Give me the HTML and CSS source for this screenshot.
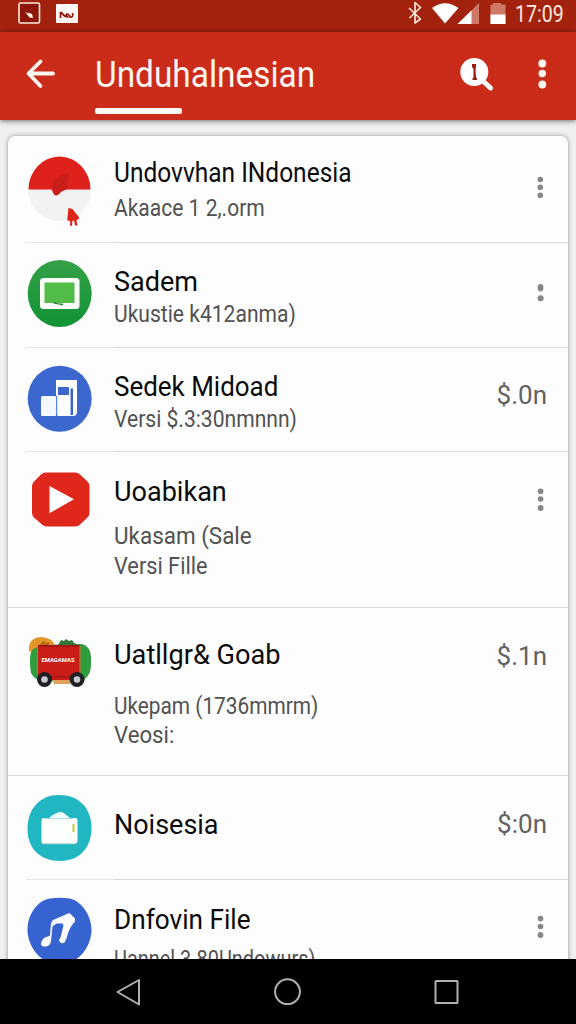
FILE: index.html
```html
<!DOCTYPE html>
<html lang="id">
<head>
<meta charset="utf-8">
<title>Unduhalnesian</title>
<link rel="stylesheet" href="styles.css">
</head>
<body>
<div class="screen">
  <header class="status">
    <svg class="status-left" viewBox="0 0 96 32">
      <rect x="19" y="3" width="20.500" height="20" rx="1.500" fill="#8c1608" stroke="#ffe9df" stroke-width="1.600"/>
      <path d="M25 11.500q2 2 4 1.500l3 1 1 4-3.500-.5z" fill="#fff0ea"/>
      <rect x="56" y="4" width="22" height="19" rx="1" fill="#fff8f4"/>
      <path d="M60.500 12v6M60.500 12c2 1 3 5 7 5-3-3 0-4 2-1s4 0 3-3" fill="none" stroke="#8c1608" stroke-width="1.700"/>
    </svg>
    <svg class="status-right" viewBox="400 0 112 32">
      <path d="M409 8l11.500 11-5.500 4V2.500l5.500 5-11 10.500" fill="none" stroke="#ffe9df" stroke-width="1.600" stroke-linejoin="round"/>
      <path d="M432 8Q445-1.500 458.500 8L445 23.500z" fill="#fff"/>
      <path d="M479 3v21h-21.500z" fill="#cf7866"/>
      <path d="M471.500 10.500V24H457.500z" fill="#fff"/>
      <path d="M493 3h8v1.500h4.500V24h-15V4.500h2.500z" fill="#cf7866"/>
      <path d="M490.500 14.500h15V24h-15z" fill="#fff"/>
    </svg>
    <span class="clock"><span class="fit f-clock">17:09</span></span>
  </header>
  <div class="appbar">
    <svg class="back" viewBox="24 56 34 36"><path d="M40.500 61.500L28.500 73.500l12 12.500M29 73.500h24" fill="none" stroke="#fff6f0" stroke-width="3.800" stroke-linecap="round" stroke-linejoin="round"/></svg>
    <div class="heading"><h1><span class="fit f-head">Unduhalnesian</span></h1><div class="tab"></div></div>
    <svg class="search" viewBox="458 54 38 40">
      <path d="M483 81l7.500 7" stroke="#fff" stroke-width="5" stroke-linecap="round"/>
      <circle cx="474.300" cy="72" r="14" fill="#fff"/>
      <path d="M472 64h4v3l-.5 2 .5 8.500 1 1v1.500h-4.500v-1.500l1-1V69l-1.500-2z" fill="#961c10"/>
    </svg>
    <svg class="more" viewBox="534 56 16 36"><g fill="#fff8f2"><circle cx="542.300" cy="63.500" r="3.900"/><circle cx="542.300" cy="73.500" r="3.700"/><circle cx="542.300" cy="84.500" r="3.900"/></g></svg>
  </div>
  <main class="page">
    <div class="card">
      <article class="row r1">
        <svg class="icon" viewBox="26 154 66 76">
          <circle cx="59.500" cy="189.500" r="31.500" fill="#f2f2f3"/>
          <path d="M28.500 189.500a31 33 0 0 1 62 0z" fill="#df211c"/>
          <path d="M69 174c-8-1-19 6-17 16 2 8 6 6 9 2l8-4c-5-3 0-8 0-14z" fill="#c91e1a"/>
          <path d="M68.500 208l4 1 7 9-3 2.500 1 5h-2.500l-1-5-1.500.2-.5 5H70l.2-4.500-3-1z" fill="#dc241b"/>
        </svg>
        <div class="copy"><h2><span class="fit t1">Undovvhan INdonesia</span></h2><p><span class="fit s1">Akaace 1 2,.orm</span></p></div>
        <svg class="dots" viewBox="534 174 12 28"><circle cx="540.300" cy="179.500" r="2.800"/><circle cx="540.300" cy="187.300" r="2.800"/><circle cx="540.300" cy="195.200" r="2.800"/></svg>
      </article>
      <article class="row r2">
        <svg class="icon" viewBox="26 259 66 70">
          <defs><linearGradient id="green" x2="0" y2="1"><stop stop-color="#35a047"/><stop offset="1" stop-color="#119335"/></linearGradient></defs>
          <ellipse cx="59.700" cy="293.500" rx="32" ry="33.500" fill="url(#green)"/>
          <rect x="40" y="278" width="39.500" height="31" rx="3.500" fill="#fcfffa"/>
          <rect x="44.500" y="282.500" width="30" height="20.500" fill="#51bc47"/>
          <path d="M53.500 302l5 1.200 5 .5-1 1.800-5-1.300-4-.5z" fill="#35833b"/>
        </svg>
        <div class="copy"><h2><span class="fit t2">Sadem</span></h2><p><span class="fit s2">Ukustie k412anma)</span></p></div>
        <svg class="dots" viewBox="534 279 12 28"><rect x="537.700" y="284" width="5.600" height="7.400" rx="2.800"/><circle cx="540.600" cy="298.200" r="3"/></svg>
      </article>
      <article class="row r3">
        <svg class="icon" viewBox="26 364 66 70">
          <ellipse cx="59.700" cy="398.700" rx="32" ry="33" fill="#3b67cf"/>
          <path d="M56 380h21v33l-2 3h-6V387H58v9h-2z" fill="#fff"/>
          <path d="M70.500 388.500h2.500V415h-2.500z" fill="#3564cf"/>
          <rect x="41" y="396" width="15.200" height="20" rx="1.500" fill="#f5f9ff"/>
          <rect x="57.200" y="395" width="13" height="21" rx="1" fill="#fcfeff"/>
        </svg>
        <div class="copy"><h2><span class="fit t3">Sedek Midoad</span></h2><p><span class="fit s3">Versi $.3:30nmnnn)</span></p></div>
        <span class="price">$.0n</span>
      </article>
      <article class="row r4">
        <svg class="icon" viewBox="26 466 66 70">
          <path d="M46 472.500h29q3 0 5 2l7 6.500q2.500 2 2.500 5v27q0 3-2.500 5l-7 6.500q-2 2-5 2H47q-3 0-5-2l-7.500-6.500q-2.500-2-2.500-5v-27q0-3 2.500-5l6.500-6.500q2-2 5-2z" fill="#df271c"/>
          <path d="M49.500 486l24.500 13.200-24.500 14z" fill="#fff"/>
        </svg>
        <div class="copy"><h2><span class="fit t4">Uoabikan</span></h2><p><span class="fit s4">Ukasam (Sale</span><br><span class="fit s4b">Versi Fille</span></p></div>
        <svg class="dots" viewBox="534 486 12 28"><circle cx="540.600" cy="491.300" r="2.800"/><circle cx="540.600" cy="499" r="2.800"/><circle cx="540.600" cy="508" r="2.900"/></svg>
      </article>
      <article class="row r5">
        <svg class="icon" viewBox="26 630 66 70">
          <path d="M35 645c-7 6-5 22-4 28q4 8 14 8h37c9-5 9-13 9-19 0-8 0-15-9-18z" fill="#2f9c3e"/>
          <path d="M29 651c-1-10 5-14 13-14 8 1 12 4 13 9l-17 1c-4 1-6 3-8 5z" fill="#e49626"/>
          <path d="M41 643l3-2 2 2 3-1v4H38z" fill="#b96a17"/>
          <path d="M58 645l3-5 3 1 2-2 3 2 3-1 2 3 3 1v3H58z" fill="#36763b"/>
          <path d="M52 678h18v6H54z" fill="#e3a05a"/>
          <path d="M38 645h42v35H38z" fill="#ca1d18"/>
          <path d="M38 645h42v2H38zM39 676h40v1.500H39z" fill="#a61615"/>
          <path d="M80 646v30M37.500 647v26" stroke="#b47a35" stroke-width="1.200"/>
          <g fill="#201f24"><circle cx="44.500" cy="679.500" r="7.500"/><circle cx="77" cy="679.500" r="7.500"/></g>
          <g fill="#c7cbd0"><circle cx="44.500" cy="679.500" r="3.300"/><circle cx="77" cy="679.500" r="3.300"/></g>
          <text class="van" x="41.500" y="661.800" textLength="33" lengthAdjust="spacingAndGlyphs">EMAGAMAS</text>
        </svg>
        <div class="copy"><h2><span class="fit t5">Uatllgr&amp; Goab</span></h2><p><span class="fit s5">Ukepam (1736mmrm)</span><br><span class="fit s5b">Veosi:</span></p></div>
        <span class="price">$.1n</span>
      </article>
      <article class="row r6">
        <svg class="icon" viewBox="26 793 66 70">
          <path d="M59 795c20 0 32 13 32.500 32 .5 20-12 34-31 34-21 0-33-13-33-32 0-21 13-34 31.500-34z" fill="#20b7c3"/>
          <path d="M48 819q5-5 9-6c3-2 6-1 8 1l5 4v3H48z" fill="#f0fcfd"/>
          <rect x="41.500" y="818" width="36" height="26" rx="2.500" fill="#fdfffc"/>
          <path d="M45 818.500h28" stroke="#a6dfe6"/>
          <path d="M43 844h31q4 0 4-5" stroke="#71bfc0" fill="none"/>
          <path d="M73.500 824v8" stroke="#c6c93b" stroke-width="2"/>
        </svg>
        <div class="copy"><h2><span class="fit t6">Noisesia</span></h2></div>
        <span class="price">$:0n</span>
      </article>
      <article class="row r7">
        <svg class="icon" viewBox="26 896 66 70">
          <path d="M50 898.500q10-1.500 20 0c12 3 21 17 21.500 31 0 17-13 35-32 35s-32-18-32-35c0-15 10-29 22.500-31z" fill="#3663cf"/>
          <path d="M51 923l2-3 15-6.500q2-1 3 1l4 4v3q-6 6-8.500 17l-2 4q-3 2-5-1-1-2 1-4l3-12-1-2h-6l-4 3-1.500 15q-1 5-6 5-4 .5-4-3 1-6 7-7l2-1z" fill="#fafcff"/>
        </svg>
        <div class="copy"><h2><span class="fit t7">Dnfovin File</span></h2><p><span class="fit s7">Uannel 3.80Undowurs)</span></p></div>
        <svg class="dots" viewBox="534 913 12 28"><circle cx="540.500" cy="918.600" r="2.800"/><circle cx="540.500" cy="926.500" r="2.800"/><circle cx="540.500" cy="935" r="2.900"/></svg>
      </article>
    </div>
  </main>
  <nav class="navbar">
    <svg viewBox="112 976 32 32"><path d="M139 980v24.500L117.500 992z"/></svg>
    <svg viewBox="271 976 32 32"><circle cx="287.500" cy="991.700" r="12.400"/></svg>
    <svg viewBox="430 976 32 32"><rect x="435.500" y="981" width="22" height="22" rx=".5"/></svg>
  </nav>
</div>
</body>
</html>
```
FILE: styles.css
```css
* { box-sizing: border-box; }
body { margin: 0; font-family: Roboto, "Liberation Sans", sans-serif; }
h1, h2, p { margin: 0; font-weight: 400; }
svg { display: block; flex: none; }
.screen { display: flex; flex-direction: column; width: 576px; height: 1024px; overflow: hidden; background: #eeeff1; }
.status { display: flex; flex: none; align-items: center; height: 32px; background: #a2220e; color: #ffe9df; }
.status-left { width: 96px; height: 32px; }
.status-right { width: 112px; height: 32px; margin-left: 304px; }
.clock { width: 56px; margin: -3px 0 0 3px; font-size: 23px; line-height: 26px; white-space: nowrap; }
.appbar { z-index: 1; display: flex; flex: none; align-items: flex-start; height: 88px; background: #cb2b19; box-shadow: 0 1px 5px rgba(0, 0, 0, .55); }
.back { width: 34px; height: 36px; margin: 24px 0 0 24px; }
.heading { width: 363px; margin: 21px 0 0 37px; }
.heading h1 { height: 44px; color: #fff6f0; font-size: 36px; line-height: 44px; }
.tab { width: 87px; height: 6px; margin-top: 11px; border-radius: 2px; background: #fffaf6; }
.search { width: 38px; height: 40px; margin-top: 22px; }
.more { width: 16px; height: 36px; margin: 24px 0 0 38px; }
.page { flex: 1; min-height: 0; overflow: hidden; padding: 16px 8px 0; }
.card { border-radius: 7px 7px 0 0; background: #fdfdfd; box-shadow: 0 0 4px rgba(0, 0, 0, .4); }
.row { display: flex; align-items: flex-start; padding-left: 18px; background: linear-gradient(90deg, transparent 18px, #e7e9e9 18px, #e7e9e9 106px, #dadcdd 106px) bottom / 100% 1.500px no-repeat; }
.icon { width: 66px; height: 70px; }
.copy { width: 422px; padding-left: 22px; white-space: nowrap; }
.copy h2 { color: #0b0b0b; font-size: 28px; line-height: 34px; height: 32px; }
.copy p { color: #525252; font-size: 24px; line-height: 30px; }
.fit { display: inline-block; transform-origin: left; }
.f-clock { transform: scaleX(.85); }
.f-head { transform: scaleX(.928); }
.t1 { transform: scaleX(.875); }
.t2 { transform: scaleX(.965); }
.t3 { transform: scaleX(.927); }
.t4 { transform: scaleX(.966); }
.t5 { transform: scaleX(.97); }
.t6 { transform: scaleX(.963); }
.t7 { transform: scaleX(.935); }
.s1 { transform: scaleX(.876); }
.s2, .s3 { transform: scaleX(.878); }
.s4 { transform: scaleX(.935); }
.s4b { transform: scaleX(.905); }
.s5 { transform: scaleX(.867); }
.s5b { transform: scaleX(.925); }
.s7 { transform: scaleX(.83); }
.dots { width: 12px; height: 28px; margin-left: 20px; fill: #868686; }
.price { flex: 1; padding-right: 21px; text-align: right; color: #626262; font-size: 26px; line-height: 32px; }
.r1 { height: 107px; }
.r1 .icon { height: 76px; margin-top: 18px; }
.r1 .copy { padding-top: 20px; }
.r1 p { padding-top: 5px; }
.r1 .dots { margin-top: 38px; }
.r2 { height: 105px; }
.r2 .icon { margin-top: 16px; }
.r2 .copy { padding-top: 22px; }
.r2 p { padding-top: 2px; }
.r2 .dots { margin-top: 36px; }
.r3 { height: 104px; }
.r3 .icon { margin-top: 16px; }
.r3 .copy { padding-top: 22px; }
.r3 p { padding-top: 2px; }
.r3 .price { padding-top: 31px; }
.r4 { height: 156px; }
.r4 .icon { margin-top: 14px; }
.r4 .copy { padding-top: 23px; }
.r4 p { padding-top: 14px; }
.r4 .dots { margin-top: 34px; }
.r5 { height: 168px; }
.r4, .r5 { background-image: linear-gradient(#d5d7d8, #d5d7d8); }
.r5 .icon { margin-top: 22px; }
.r5 .copy { padding-top: 30px; }
.r5 p { padding-top: 22px; line-height: 29px; }
.r5 .price { padding-top: 32px; }
.r6 { height: 104px; }
.r6 .icon { margin-top: 17px; }
.r6 .copy { padding-top: 32px; }
.r6 .price { padding-top: 32px; }
.r7 { height: 104px; }
.r7 .icon { margin-top: 16px; }
.r7 .copy { padding-top: 23px; }
.r7 p { padding-top: 9px; }
.r7 .dots { margin-top: 33px; }
.van { fill: #fff; font: 700 6px Roboto, sans-serif; }
.navbar { z-index: 1; display: flex; flex: none; align-items: flex-start; height: 65px; padding: 17px 114px 0 112px; justify-content: space-between; background: #000; }
.navbar svg { width: 32px; height: 32px; fill: none; stroke: #b4b0ae; stroke-width: 2; stroke-linejoin: round; }
```
